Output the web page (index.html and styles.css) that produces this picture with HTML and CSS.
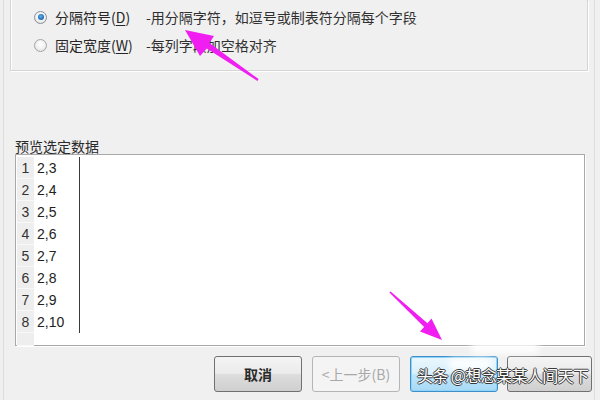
FILE: index.html
```html
<!DOCTYPE html>
<html lang="zh-CN">

<head>
    <meta charset="UTF-8">
    <title>文本导入向导</title>
    <link rel="stylesheet" href="styles.css">
</head>

<body>
    <div class="dialog">
        <!-- 原始数据类型 -->
        <div class="group">
            <label class="option">
                <span class="radio checked"></span>
                <span class="opt-name">分隔符号(<u>D</u>)</span>
                <span class="opt-desc">-用分隔字符，如逗号或制表符分隔每个字段</span>
            </label>
            <label class="option">
                <span class="radio"></span>
                <span class="opt-name">固定宽度(<u>W</u>)</span>
                <span class="opt-desc">-每列字段加空格对齐</span>
            </label>
        </div>

        <!-- 预览 -->
        <div class="preview-label">预览选定数据</div>
        <div class="preview">
            <div class="preview-table">
                <div class="row"><span class="num">1</span><span class="val">2,3</span></div>
                <div class="row"><span class="num">2</span><span class="val">2,4</span></div>
                <div class="row"><span class="num">3</span><span class="val">2,5</span></div>
                <div class="row"><span class="num">4</span><span class="val">2,6</span></div>
                <div class="row"><span class="num">5</span><span class="val">2,7</span></div>
                <div class="row"><span class="num">6</span><span class="val">2,8</span></div>
                <div class="row"><span class="num">7</span><span class="val">2,9</span></div>
                <div class="row"><span class="num">8</span><span class="val">2,10</span></div>
                <div class="row row-empty"><span class="num"></span><span class="val"></span></div>
            </div>
        </div>

        <!-- 按钮 -->
        <div class="buttons">
            <button class="btn">取消</button>
            <button class="btn disabled">&lt;上一步(B)</button>
            <button class="btn focused"></button>
            <button class="btn last"></button>
        </div>
    </div>

    <!-- 标注箭头 -->
    <svg class="marks" width="600" height="400" viewBox="0 0 600 400">
        <polygon fill="#f01ef0" points="185,30 214,36 209.4,43 258.6,79.1 257.4,80.9 206.8,48.6 200,56" />
        <polygon fill="#f01ef0" points="442,340 420,331.5 424.1,326.9 389.4,292.6 390.6,291.4 427.5,323.3 431.5,318.5" />
    </svg>

    <div class="blur blur-a"></div>
    <div class="blur blur-b"></div>
    <div class="watermark">头条 @想念某某人间天下</div>
</body>

</html>
```

FILE: styles.css
```css
/* 基本样式 */
body {
    margin: 0;
    width: 600px;
    height: 400px;
    overflow: hidden;
    background-color: #f0f0f0;
    font-family: "Noto Sans CJK SC", "Liberation Sans", sans-serif;
    font-size: 14px;
    color: #1e1e1e;
    position: relative;
}

.dialog {
    margin-left: 3px;
    width: 592px;
    height: 400px;
    box-sizing: border-box;
    border-left: 1px solid #dddddd;
    border-right: 1px solid #dddddd;
}

/* 原始数据类型分组框 */
.group {
    margin: 0 6px;
    height: 71px;
    box-sizing: border-box;
    padding: 3px 0 0 23px;
    border: 1px solid #d5d5d5;
    border-top: none;
    box-shadow: inset 1px 0 0 #ffffff, 1px 1px 0 #ffffff;
}

.option {
    display: flex;
    align-items: center;
    height: 28px;
    line-height: 18px;
}

.radio {
    width: 13px;
    height: 13px;
    box-sizing: border-box;
    border-radius: 50%;
    border: 1px solid #a4a4a4;
    background: radial-gradient(circle at 50% 40%, #ffffff 0%, #f0f0f0 55%, #d4d4d4 100%);
    position: relative;
    margin-right: 8px;
}

.radio.checked {
    border-color: #8a8f94;
}

.radio.checked::after {
    content: '';
    position: absolute;
    left: 2.5px;
    top: 2.5px;
    width: 6px;
    height: 6px;
    border-radius: 50%;
    background: radial-gradient(circle at 45% 40%, #5fb4f0 0%, #2a7bc0 50%, #1a4f82 100%);
}

.opt-name {
    width: 91px;
    color: #262626;
}

.opt-name u {
    text-decoration-thickness: 1px;
    text-underline-offset: 2px;
}

.opt-desc {
    color: #303030;
}

/* 预览区域 */
.preview-label {
    margin-top: 67px;
    padding-left: 11px;
    height: 16px;
    line-height: 16px;
    color: #2a2a2a;
}

.preview {
    margin-left: 11px;
    width: 570px;
    height: 192px;
    box-sizing: border-box;
    border: 1px solid #a8a8a8;
    background-color: #ffffff;
    padding: 1px 0 0 1px;
    box-shadow: 1px 1px 0 #ffffff;
}

.preview-table {
    display: flex;
    flex-direction: column;
    padding-top: 1px;
}

.row {
    display: flex;
    height: 22px;
    line-height: 22px;
    font-family: "Liberation Sans", sans-serif;
    font-size: 14px;
    color: #222222;
}

.num {
    width: 17px;
    text-align: center;
    background-color: #eeeeee;
    border-bottom: 1px solid #f8f8f8;
    box-sizing: border-box;
    color: #333333;
}

.val {
    width: 46px;
    padding-left: 3px;
    box-sizing: border-box;
    border-right: 1px solid #3a3a3a;
}

.row-empty {
    height: 13px;
}

.row-empty .val {
    border-right: none;
}

/* 按钮 */
.buttons {
    display: flex;
    justify-content: flex-end;
    gap: 10px;
    margin-top: 10px;
    padding-right: 2px;
}

.btn {
    width: 88px;
    height: 36px;
    border: 1px solid #707070;
    border-radius: 3px;
    background: linear-gradient(#f4f4f4 0%, #ebebeb 48%, #dddddd 52%, #cfcfcf 100%);
    font-family: "Noto Sans CJK SC", sans-serif;
    font-size: 14px;
    font-weight: bold;
    color: #2a2a2a;
    padding: 0;
}

.btn.disabled {
    border-color: #b5b5b5;
    background: #f4f4f4;
    color: #a8a8a8;
    font-weight: normal;
}

.btn.focused {
    border-color: #3c8fc8;
    background: linear-gradient(#eaf6fd 0%, #d9f0fc 48%, #bee6fd 52%, #a7d9f5 100%);
    box-shadow: inset 0 0 0 1px #8fd3f7;
}

.btn.last {
    width: 85px;
    margin-left: -1px;
}

/* 标注与水印 */
.marks {
    position: absolute;
    left: 0;
    top: 0;
    pointer-events: none;
}

.blur {
    position: absolute;
    background-color: rgba(255, 255, 255, 0.85);
    filter: blur(3px);
    border-radius: 6px;
}

.blur-a {
    left: 448px;
    top: 358px;
    width: 44px;
    height: 12px;
}

.blur-b {
    left: 470px;
    top: 342px;
    width: 70px;
    height: 12px;
}

.watermark {
    position: absolute;
    left: 417px;
    top: 364px;
    font-family: "Noto Sans CJK SC", sans-serif;
    font-size: 16px;
    line-height: 22px;
    letter-spacing: -0.6px;
    color: #ffffff;
    text-shadow: 1px 0 0 #3a3a3a, -1px 0 0 #3a3a3a, 0 1px 0 #3a3a3a, 0 -1px 0 #3a3a3a;
    white-space: nowrap;
}
```
